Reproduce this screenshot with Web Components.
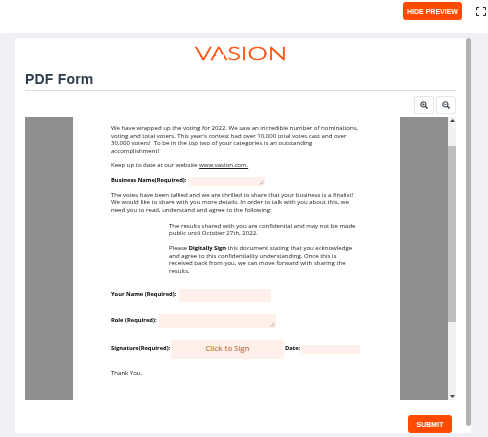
<!DOCTYPE html>
<html>
<head>
<meta charset="utf-8">
<title>PDF Form</title>
<style>
  html, body { margin: 0; height: 437px; overflow: hidden; }
  body { background: #eff0f3; font-family: "Liberation Sans", Arial, sans-serif; }
</style>
</head>
<body>
<preview-page></preview-page>

<script>
class OrangeButton extends HTMLElement {
    constructor() {
        super();
        this.attachShadow({ mode: 'open' }).innerHTML = `
        <style>
            :host {
                display: flex;
                align-items: center;
                justify-content: center;
                height: 18px;
                background: #ff4a00;
                border-radius: 3px;
                color: #fff;
                font: 700 7px "Liberation Sans", Arial, sans-serif;
                white-space: nowrap;
            }
        </style>
        <slot></slot>`;
    }
}
customElements.define('orange-button', OrangeButton);

class TopBar extends HTMLElement {
    constructor() {
        super();
        this.attachShadow({ mode: 'open' }).innerHTML = `
        <style>
            :host {
                display: flex;
                align-items: flex-start;
                justify-content: flex-end;
                height: 33px;
                background: #fff;
                box-sizing: border-box;
                padding: 2px 2px 0 0;
            }
            orange-button { width: 59px; margin-right: 14px; }
            svg { display: block; margin-top: 5px; }
        </style>
        <orange-button>HIDE PREVIEW</orange-button>
        <svg width="10" height="9" viewBox="0 0 10 9" fill="none" stroke="#222" stroke-width="1">
            <path d="M.5 3V.5H3M7 .5h2.5V3M9.5 6v2.5H7M3 8.5H.5V6"/>
        </svg>`;
    }
}
customElements.define('top-bar', TopBar);

class ZoomButton extends HTMLElement {
    constructor() {
        super();
        const plus = this.getAttribute('kind') === 'in';
        this.attachShadow({ mode: 'open' }).innerHTML = `
        <style>
            :host {
                display: flex;
                align-items: center;
                justify-content: center;
                width: 20px;
                height: 18px;
                box-sizing: border-box;
                border: 1px solid #e6e6e6;
                border-radius: 2px;
                background: #fff;
            }
        </style>
        <svg width="8" height="8" viewBox="0 0 9 9" fill="none" stroke="#2f3b46">
            <circle cx="3.8" cy="3.8" r="2.9" stroke-width="1.2"/>
            <path d="M6 6l2.5 2.5" stroke-width="1.6"/>
            <path d="M2.3 3.8h3${plus ? 'M3.8 2.3v3' : ''}" stroke-width=".8"/>
        </svg>`;
    }
}
customElements.define('zoom-button', ZoomButton);

class PdfField extends HTMLElement {
    constructor() {
        super();
        const grip = this.hasAttribute('grip');
        this.attachShadow({ mode: 'open' }).innerHTML = `
        <style>
            :host {
                display: flex;
                align-items: center;
                justify-content: center;
                box-sizing: border-box;
                background: #fff1e9;
                position: relative;
                color: #c0765a;
                font-size: 7.4px;
                letter-spacing: .1px;
                font-weight: 600;
            }
            svg { position: absolute; right: 1px; bottom: 1px; }
        </style>
        <slot></slot>
        ${grip ? `<svg width="5" height="5" viewBox="0 0 5 5" stroke="#8a8a8a" stroke-width=".6"><path d="M.5 4.5l4-4M2.8 4.5l1.7-1.7"/></svg>` : ''}`;
    }
}
customElements.define('pdf-field', PdfField);

class PdfPage extends HTMLElement {
    constructor() {
        super();
        this.attachShadow({ mode: 'open' }).innerHTML = `
        <style>
            :host {
                display: block;
                flex: 1;
                background: #fff;
                box-sizing: border-box;
                padding: 8px 0 0 38px;
                overflow: hidden;
                color: #222;
                font: 6.05px/7.7px "Open Sans", "Noto Sans", sans-serif;
                white-space: nowrap;
            }
            p { margin: 0; }
            b { color: #000; font-weight: 700; font-size: 5.75px; flex: none; }
            a { color: inherit; text-decoration: underline; }
            .row { display: flex; align-items: center; }
            .indent { margin-left: 58px; }
        </style>
        <p>We have wrapped up the voting for 2022. We saw an incredible number of nominations,<br>
        voting and total voters. This year's contest had over 10,000 total votes cast and over<br>
        30,000 voters!&nbsp; To be in the top two of your categories is an outstanding<br>
        accomplishment!</p>
        <p style="margin-top:6px">Keep up to date at our website <a>www.vasion.com.</a></p>
        <div class="row" style="margin-top:7px;height:9px">
            <b style="width:79px">Business Name(Required):</b>
            <pdf-field grip style="width:75px;height:9px"></pdf-field>
        </div>
        <p style="margin-top:6px">The votes have been tallied and we are thrilled to share that your business is a finalist!<br>
        We would like to share with you more details. In order to talk with you about this, we<br>
        need you to read, understand and agree to the following:</p>
        <p class="indent" style="margin-top:8px">The results shared with you are confidential and may not be made<br>
        public until October 27th, 2022.</p>
        <p class="indent" style="margin-top:7px">Please <b>Digitally Sign</b> this document stating that you acknowledge<br>
        and agree to this confidentiality understanding. Once this is<br>
        received back from you, we can move forward with sharing the<br>
        results.</p>
        <div class="row" style="margin-top:13px;height:13px">
            <b style="width:68px">Your Name (Required):</b>
            <pdf-field style="width:92px;height:13px"></pdf-field>
        </div>
        <div class="row" style="margin-top:12px;height:14px">
            <b style="width:48px">Role (Required):</b>
            <pdf-field grip style="width:117px;height:14px"></pdf-field>
        </div>
        <div class="row" style="margin-top:12px;height:19px">
            <b style="width:60px">Signature(Required):</b>
            <pdf-field style="width:113px;height:19px">Click to Sign</pdf-field>
            <b style="width:17px;margin-left:1px">Date:</b>
            <pdf-field style="width:58px;height:9px"></pdf-field>
        </div>
        <p style="margin-top:11px">Thank You,</p>`;
    }
}
customElements.define('pdf-page', PdfPage);

class PdfViewer extends HTMLElement {
    constructor() {
        super();
        this.attachShadow({ mode: 'open' }).innerHTML = `
        <style>
            :host { display: flex; height: 283px; }
            .side { width: 48px; background: #8f8f8f; }
            .bar {
                width: 8px;
                background: #f1f1f1;
                display: flex;
                flex-direction: column;
                align-items: center;
                justify-content: space-between;
            }
            .arrow { height: 7px; display: flex; align-items: center; }
            .thumb { width: 8px; height: 176px; background: #bdbdbd; margin-top: 22px; margin-bottom: auto; }
        </style>
        <div class="side"></div>
        <pdf-page></pdf-page>
        <div class="side"></div>
        <div class="bar">
            <div class="arrow"><svg width="5" height="3" viewBox="0 0 5 3"><path d="M2.5 0L5 3H0z" fill="#444"/></svg></div>
            <div class="thumb"></div>
            <div class="arrow"><svg width="5" height="3" viewBox="0 0 5 3"><path d="M0 0h5L2.5 3z" fill="#444"/></svg></div>
        </div>`;
    }
}
customElements.define('pdf-viewer', PdfViewer);

class FormCard extends HTMLElement {
    constructor() {
        super();
        this.attachShadow({ mode: 'open' }).innerHTML = `
        <style>
            :host {
                display: flex;
                width: 456px;
                height: 395px;
                margin: 5px 0 0 15px;
                background: #fff;
                border-radius: 3px 3px 0 0;
            }
            .content { width: 431px; padding: 0 10px; display: flex; flex-direction: column; }
            .logo { display: block; margin: 5px auto 0; flex: none; }
            h1 {
                margin: 7px 0 0;
                font: 700 14px/18px "Liberation Sans", Arial, sans-serif;
                color: #2c3b4d;
                letter-spacing: .2px;
                padding-bottom: 2px;
                border-bottom: 1px solid #dcdde0;
            }
            .tools { display: flex; justify-content: flex-end; gap: 2px; margin: 5px 0 3px; }
            .foot { display: flex; justify-content: flex-end; margin: 15px 4px 0 0; }
            orange-button { width: 44px; }
            .scroll { width: 5px; height: 388px; margin-left: auto; background: #b2b2b2; border-radius: 3px; }
        </style>
        <div class="content">
            <svg class="logo" width="92" height="20" viewBox="0 0 92 20">
                <text x="0" y="17" textLength="92" lengthAdjust="spacingAndGlyphs"
                    font-family="Lato, 'Open Sans', sans-serif" font-size="17" font-weight="300"
                    fill="#ff4f0a" stroke="#ff4f0a" stroke-width=".45">VASION</text>
                <rect x="21" y="11.5" width="8" height="3" fill="#fff"/>
            </svg>
            <h1>PDF Form</h1>
            <div class="tools">
                <zoom-button kind="in"></zoom-button>
                <zoom-button kind="out"></zoom-button>
            </div>
            <pdf-viewer></pdf-viewer>
            <div class="foot"><orange-button>SUBMIT</orange-button></div>
        </div>
        <div class="scroll"></div>`;
    }
}
customElements.define('form-card', FormCard);

class PreviewPage extends HTMLElement {
    constructor() {
        super();
        this.attachShadow({ mode: 'open' }).innerHTML = `
        <style>
            :host { display: block; height: 437px; overflow: hidden; filter: blur(.3px); }
        </style>
        <top-bar></top-bar>
        <form-card></form-card>`;
    }
}
customElements.define('preview-page', PreviewPage);
</script>
</body>
</html>
